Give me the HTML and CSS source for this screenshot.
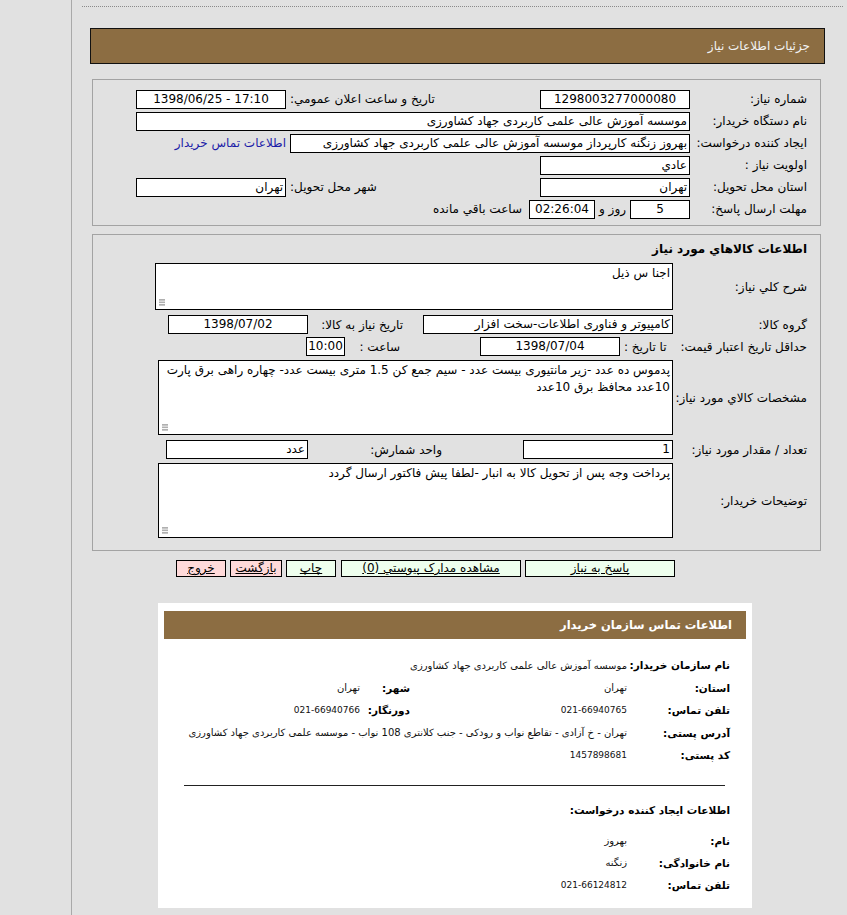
FILE: index.html
```html
<!DOCTYPE html>
<html lang="fa">
<head>
<meta charset="utf-8">
<title>جزئيات اطلاعات نياز</title>
<link rel="stylesheet" href="styles.css">
</head>
<body>
<div class="layout">
  <div class="rail"></div>
  <main class="main">
    <div class="dots"></div>
    <div class="page-title">جزئيات اطلاعات نياز</div>

    <section class="panel panel-info">
      <div class="row">
        <span class="lbl">شماره نياز:</span>
        <span class="box w150 c">1298003277000080</span>
        <span class="lbl2">تاريخ و ساعت اعلان عمومي:</span>
        <span class="box w150 c"><bdi class="ltr">1398/06/25 - 17:10</bdi></span>
      </div>
      <div class="row">
        <span class="lbl">نام دستگاه خريدار:</span>
        <span class="box w554">موسسه آموزش عالی علمی کاربردی جهاد کشاورزی</span>
      </div>
      <div class="row">
        <span class="lbl">ايجاد کننده درخواست:</span>
        <span class="box w400">بهروز زنگنه کارپرداز موسسه آموزش عالی علمی کاربردی جهاد کشاورزی</span>
        <a class="link" href="#">اطلاعات تماس خريدار</a>
      </div>
      <div class="row">
        <span class="lbl">اولويت نياز :</span>
        <span class="box w150">عادي</span>
      </div>
      <div class="row">
        <span class="lbl">استان محل تحويل:</span>
        <span class="box w150">تهران</span>
        <span class="lbl2">شهر محل تحويل:</span>
        <span class="box w150">تهران</span>
      </div>
      <div class="row">
        <span class="lbl">مهلت ارسال پاسخ:</span>
        <span class="box w60 c">5</span>
        <span class="txt">روز و</span>
        <span class="box w66 c">02:26:04</span>
        <span class="txt txt-wide">ساعت باقي مانده</span>
      </div>
    </section>

    <section class="panel panel-goods">
      <div class="title2">اطلاعات كالاهاي مورد نياز</div>
      <div class="row2 r-a">
        <span class="lbl-b">شرح کلي نياز:</span>
        <div class="area area-s">اجنا س ذيل</div>
      </div>
      <div class="row2 r-b">
        <span class="lbl-b">گروه کالا:</span>
        <span class="box w250">کامپیوتر و فناوری اطلاعات-سخت افزار</span>
        <span class="cell cell-date">تاريخ نياز به کالا:</span>
        <span class="box w140 c">1398/07/02</span>
      </div>
      <div class="row2 r-c">
        <span class="lbl-c">حداقل تاريخ اعتبار قيمت:</span>
        <span class="cell cell-to">تا تاريخ :</span>
        <span class="box w140 c">1398/07/04</span>
        <span class="cell cell-hour">ساعت :</span>
        <span class="box w39 c">10:00</span>
      </div>
      <div class="row2 r-d">
        <span class="lbl-b">مشخصات کالاي مورد نياز:</span>
        <div class="area area-l">پدموس ده عدد -زیر مانتیوری بیست عدد - سیم جمع کن 1.5 متری بیست عدد- چهاره راهی برق پارت 10عدد محافظ برق 10عدد</div>
      </div>
      <div class="row2 r-e">
        <span class="lbl-b">تعداد / مقدار مورد نياز:</span>
        <span class="box w150">1</span>
        <span class="cell cell-unit">واحد شمارش:</span>
        <span class="box w142">عدد</span>
      </div>
      <div class="row2 r-f">
        <span class="lbl-b">توضيحات خريدار:</span>
        <div class="area area-l">پرداخت وجه پس از تحویل کالا به انبار -لطفا پیش فاکتور ارسال گردد</div>
      </div>
    </section>

    <div class="btns">
      <a class="btn btn-green b150" href="#">پاسخ به نياز</a>
      <a class="btn btn-green b180" href="#">مشاهده مدارک پيوستي (0)</a>
      <a class="btn btn-green b50" href="#">چاپ</a>
      <a class="btn btn-pink b52" href="#">بازگشت</a>
      <a class="btn btn-pink b50" href="#">خروج</a>
    </div>

    <section class="contact">
      <div class="contact-head">اطلاعات تماس سازمان خريدار</div>
      <div class="cgrid">
        <span class="k">نام سازمان خريدار:</span>
        <span class="v span3">موسسه آموزش عالی علمی کاربردی جهاد کشاورزی</span>

        <span class="k">استان:</span>
        <span class="v">تهران</span>
        <span class="k">شهر:</span>
        <span class="v">تهران</span>

        <span class="k">تلفن تماس:</span>
        <span class="v num">021-66940765</span>
        <span class="k">دورنگار:</span>
        <span class="v num">021-66940766</span>

        <span class="k">آدرس پستی:</span>
        <span class="v span3">تهران - خ آزادی - تقاطع نواب و رودکی - جنب کلانتری 108 نواب - موسسه علمی کاربردی جهاد کشاورزی</span>

        <span class="k">کد پستی:</span>
        <span class="v num span3">1457898681</span>
      </div>
      <div class="rule"></div>
      <div class="subhead">اطلاعات ايجاد کننده درخواست:</div>
      <div class="cgrid cgrid2">
        <span class="k">نام:</span>
        <span class="v span3">بهروز</span>
        <span class="k">نام خانوادگی:</span>
        <span class="v span3">زنگنه</span>
        <span class="k">تلفن تماس:</span>
        <span class="v num span3">021-66124812</span>
      </div>
    </section>
  </main>
</div>
</body>
</html>
```

FILE: styles.css
```css
* { box-sizing: border-box; }
html, body { margin: 0; padding: 0; }
body {
  background: #e1e1e1;
  font-family: "DejaVu Sans", sans-serif;
  font-size: 12px;
  color: #000;
}
.layout { display: flex; direction: ltr; min-height: 915px; }
.rail { width: 72px; flex: none; border-right: 1px solid #a9a9a9; }
.main { flex: 1; direction: rtl; }

.dots { margin: 6px 4px 0 10px; border-top: 1px dotted #8a8a8a; }

.page-title {
  margin: 21px 22px 0 18px;
  height: 36px;
  background: #8c6d42;
  border: 1px solid #111;
  color: #f2f2f2;
  padding-right: 14px;
  line-height: 34px;
  font-size: 12px;
}

.panel { border: 1px solid #a3a3a3; margin: 0 26px 0 20px; }
.panel-info { margin-top: 15px; padding: 8px 13px 5px 0; }
.panel-goods { margin-top: 8px; padding: 5px 13px 12px 0; }

.row { display: flex; align-items: center; height: 22px; }
.lbl { width: 117px; flex: none; white-space: nowrap; }
.lbl2 { width: 254px; flex: none; text-align: left; padding-left: 4px; white-space: nowrap; }
.box {
  flex: none;
  height: 19px;
  border: 1px solid #000;
  background: #fff;
  line-height: 17px;
  padding: 0 2px;
  white-space: nowrap;
  overflow: hidden;
}
.ltr { direction: ltr; unicode-bidi: isolate; }
.c { text-align: center; }
.w39 { width: 39px; padding: 0; }
.w60 { width: 60px; }
.w66 { width: 66px; }
.w140 { width: 140px; }
.w142 { width: 142px; }
.w150 { width: 150px; }
.w250 { width: 250px; }
.w400 { width: 400px; }
.w554 { width: 554px; }
.link { color: #1c1ca8; text-decoration: none; margin-right: 4px; white-space: nowrap; }
.txt { margin: 0 4px; white-space: nowrap; }
.txt-wide { margin-right: 7px; }

.title2 { font-weight: bold; line-height: 18px; }
.row2 { display: flex; align-items: center; }
.lbl-b { width: 134px; flex: none; white-space: nowrap; }
.lbl-c { width: 132px; flex: none; white-space: nowrap; }
.r-a { margin-top: 5px; }
.r-b { margin-top: 5px; }
.r-c { margin-top: 3px; }
.r-d { margin-top: 4px; }
.r-e { margin-top: 5px; }
.r-f { margin-top: 4px; }
.cell { flex: none; white-space: nowrap; }
.cell-date { width: 115px; padding-right: 20px; }
.cell-to { width: 55px; padding-left: 4px; text-align: left; }
.cell-hour { width: 135px; padding-right: 80px; }
.cell-unit { width: 215px; padding-right: 81px; }

.area {
  position: relative;
  flex: none;
  background: #fff;
  border: 1px solid #000;
  padding: 1px 2px;
  line-height: 17px;
}
.area::after {
  content: "";
  position: absolute;
  left: 3px;
  bottom: 3px;
  width: 6px;
  height: 7px;
  background-image: radial-gradient(circle at 1px 1px, #b0b0b0 0.9px, transparent 1.1px);
  background-size: 2px 2.5px;
}
.area-s { width: 518px; height: 47px; }
.area-l { width: 515px; height: 75px; }

.btns { display: flex; gap: 4px; margin: 9px 172px 0 0; }
.btn {
  flex: none;
  height: 17px;
  border: 1px solid #000;
  color: #000;
  text-align: center;
  line-height: 15px;
  text-decoration: underline;
  white-space: nowrap;
}
.btn-green { background: #eeffee; }
.btn-pink { background: #ffdada; }
.b150 { width: 150px; }
.b180 { width: 180px; margin-left: 1px; }
.b50 { width: 50px; }
.b52 { width: 52px; }

.contact {
  margin: 26px 95px 0 86px;
  background: #fff;
  padding: 8px 6px 0;
  height: 305px;
}
.contact-head {
  height: 28px;
  background: #8c6d42;
  color: #fff;
  font-weight: bold;
  font-size: 11.5px;
  line-height: 28px;
  padding-right: 14px;
}
.cgrid {
  display: grid;
  grid-template-columns: 103px 217px 50px 1fr;
  grid-auto-rows: 22.5px;
  align-items: center;
  margin: 15px 16px 0 0;
}
.cgrid2 { grid-auto-rows: 22px; margin-top: 12px; }
.k { font-weight: bold; font-size: 10.5px; white-space: nowrap; }
.v { font-size: 10px; white-space: nowrap; color: #111; }
.v.num { font-size: 9px; }
.span3 { grid-column: span 3; }
.rule { margin: 18px 21px 0 20px; border-top: 1px solid #222; }
.subhead { margin: 16px 16px 0 0; font-weight: bold; font-size: 10.5px; line-height: 16px; }
```
